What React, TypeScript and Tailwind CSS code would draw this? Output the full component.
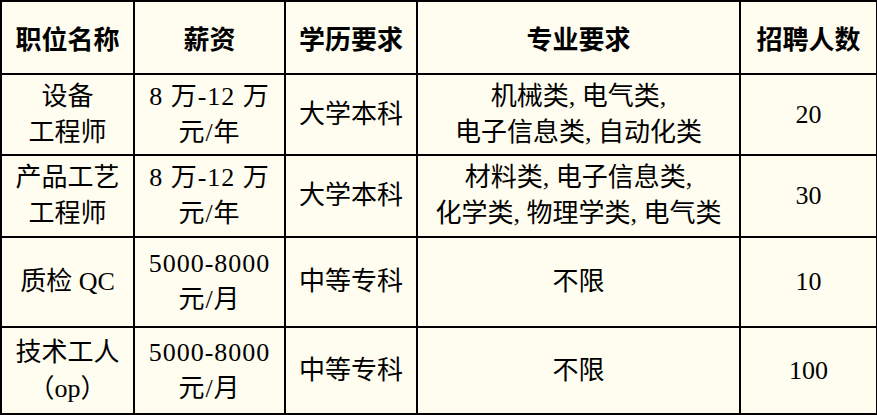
const rows = [
  { name: ["设备", "工程师"], pay: ["8 万-12 万", "元/年"], edu: "大学本科", major: ["机械类, 电气类,", "电子信息类, 自动化类"], count: "20", h: "h-[81px]" },
  { name: ["产品工艺", "工程师"], pay: ["8 万-12 万", "元/年"], edu: "大学本科", major: ["材料类, 电子信息类,", "化学类, 物理学类, 电气类"], count: "30", h: "h-[82px]" },
  { name: ["质检 QC"], pay: ["5000-8000", "元/月"], edu: "中等专科", major: ["不限"], count: "10", h: "h-[90px]" },
  { name: ["技术工人", "（op）"], pay: ["5000-8000", "元/月"], edu: "中等专科", major: ["不限"], count: "100", h: "h-[87px]" },
];

function Lines({ lines }: { lines: string[] }) {
  return (
    <>
      {lines.map((l, i) => (
        <div key={i}>{l}</div>
      ))}
    </>
  );
}

export default function App() {
  const cell = "border-2 border-black text-center align-middle";
  return (
    <div className="w-[877px] h-[415px] bg-[#fffdf0] font-['Liberation_Serif','Noto_Sans_CJK_SC',serif] text-black">
      <table className="w-[876px] table-fixed border-collapse text-[26px] leading-[36px]">
        <colgroup>
          <col className="w-[133px]" />
          <col className="w-[151px]" />
          <col className="w-[132px]" />
          <col className="w-[323px]" />
          <col className="w-[137px]" />
        </colgroup>
        <thead>
          <tr className="h-[73px]">
            {["职位名称", "薪资", "学历要求", "专业要求", "招聘人数"].map((t) => (
              <th key={t} className={`${cell} font-bold font-['Noto_Sans_CJK_SC',sans-serif] text-[26px]`}>
                {t}
              </th>
            ))}
          </tr>
        </thead>
        <tbody>
          {rows.map((r, i) => (
            <tr key={i} className={r.h}>
              <td className={cell}>
                <Lines lines={r.name} />
              </td>
              <td className={`${cell} tracking-[1px]`}>
                <Lines lines={r.pay} />
              </td>
              <td className={cell}>{r.edu}</td>
              <td className={cell}>
                <Lines lines={r.major} />
              </td>
              <td className={cell}>{r.count}</td>
            </tr>
          ))}
        </tbody>
      </table>
    </div>
  );
}
